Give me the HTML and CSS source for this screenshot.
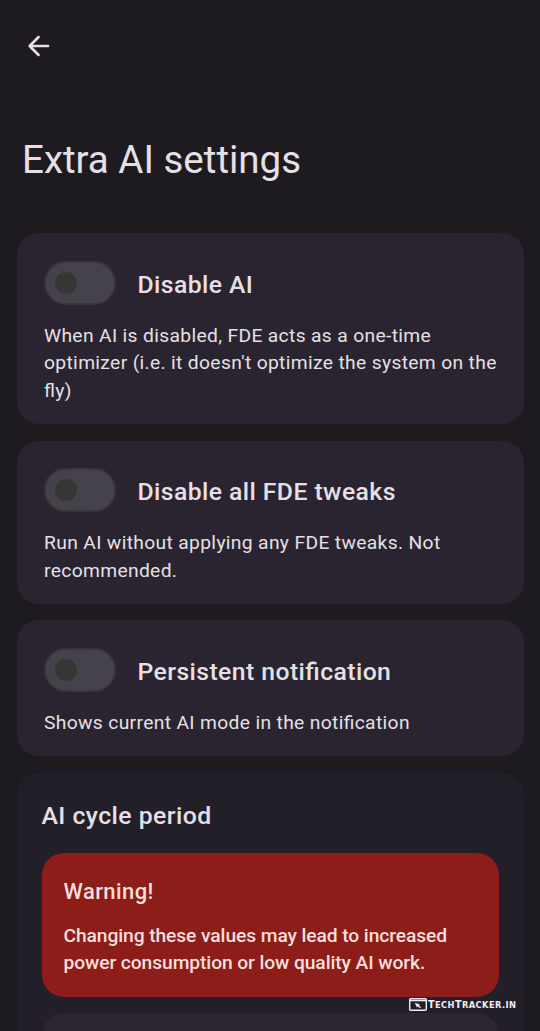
FILE: index.html
```html
<!DOCTYPE html>
<html lang="en">
<head>
<meta charset="utf-8">
<title>Extra AI settings</title>
<link rel="stylesheet" href="styles.css">
</head>
<body>
<div class="screen">
  <header class="top-bar">
    <svg class="back" viewBox="0 0 24 24" role="img" aria-label="Back"><path d="M21.1 12H3M11.6 3L2.6 12l9 9"/></svg>
    <h1 class="page-title">Extra AI settings</h1>
  </header>
  <main class="settings">
    <section class="card">
      <div class="row"><span class="switch"><span class="thumb"></span></span><h2 class="card-title">Disable AI</h2></div>
      <p class="body">When AI is disabled, FDE acts as a one-time<br>optimizer (i.e. it doesn't optimize the system on the<br>fly)</p>
    </section>
    <section class="card">
      <div class="row"><span class="switch"><span class="thumb"></span></span><h2 class="card-title">Disable all FDE tweaks</h2></div>
      <p class="body">Run AI without applying any FDE tweaks. Not<br>recommended.</p>
    </section>
    <section class="card">
      <div class="row"><span class="switch"><span class="thumb"></span></span><h2 class="card-title">Persistent notification</h2></div>
      <p class="body">Shows current AI mode in the notification</p>
    </section>
    <section class="group">
      <h2 class="group-title">AI cycle period</h2>
      <div class="warning">
        <h3 class="warning-title">Warning!</h3>
        <p class="warning-text">Changing these values may lead to increased<br>power consumption or low quality AI work.</p>
      </div>
      <div class="next-item"></div>
    </section>
  </main>
  <div class="watermark">
    <svg class="mark-icon" viewBox="0 0 18 13"><rect x=".7" y=".7" width="16.6" height="11.6" rx="1"/><path d="M1 2.6h16"/><path class="cursor" d="M5.8 5l5.2 1.3-1.2.9 2.2 2-1.1 1-2.2-2-.8 1.2z"/></svg>
    <span class="mark-text"><b>T</b>ECH<b>T</b>RACKER.IN</span>
  </div>
</div>
</body>
</html>
```
FILE: styles.css
```css
* { box-sizing: border-box; }
body { margin: 0; background: #1d1b1f; color: #e6e0e6; font-family: Roboto, sans-serif; font-feature-settings: "liga" 1; }
h1, h2, h3, p { margin: 0; }
.screen { position: relative; height: 1031px; overflow: hidden; }
.top-bar { height: 233.3px; padding: 34px 22px 0; }
.back { display: block; width: 24px; height: 24px; margin-left: 5px; fill: none; stroke: #e6e0e6; stroke-width: 2.5; stroke-linecap: round; stroke-linejoin: round; }
.page-title { margin-top: 77px; font-size: 38.5px; line-height: 50px; font-weight: 400; white-space: nowrap; }
.settings { display: flex; flex-direction: column; gap: 16.5px; padding: 0 16.5px; }
.card { padding: 27.3px 20px 19.8px 27.5px; border-radius: 22px; background: #29242f; }
.row { display: flex; align-items: center; gap: 22px; height: 44px; }
.switch { display: flex; align-items: center; width: 71.5px; height: 44px; padding-left: 8.5px; border: 2.75px solid #393739; border-radius: 22px; background: #46424b; }
.thumb { width: 22px; height: 22px; border-radius: 50%; background: #373637; }
.card-title { padding-top: 3px; font-size: 24.75px; line-height: 33px; font-weight: 500; letter-spacing: .42px; white-space: nowrap; }
.body { margin-top: 17.2px; font-size: 19.25px; line-height: 27.5px; letter-spacing: .34px; white-space: nowrap; }
.group { height: 300px; padding: 26.7px 25px 0; border-radius: 22px; background: #231f29; }
.group-title { font-size: 24.75px; line-height: 33px; font-weight: 500; letter-spacing: .45px; }
.warning { height: 143.5px; margin-top: 20.8px; padding: 24px 22px; border-radius: 22px; background: #8c1d18; color: #f9dedc; }
.warning-title { font-size: 22px; line-height: 30px; font-weight: 500; letter-spacing: .4px; }
.warning-text { margin-top: 14.5px; font-size: 19.25px; line-height: 27.5px; font-weight: 500; letter-spacing: -.1px; white-space: nowrap; }
.next-item { height: 120px; margin-top: 16.5px; border-radius: 22px; background: #2b2631; }
.watermark { position: absolute; left: 409px; top: 996px; display: flex; align-items: center; gap: 1px; color: #f2edf3; }
.mark-icon { width: 18px; height: 13px; fill: none; stroke: currentColor; stroke-width: 1.4; }
.mark-icon .cursor { fill: currentColor; stroke: none; }
.mark-text { padding-top: 2px; font: 700 8.3px/13px "DejaVu Sans", sans-serif; letter-spacing: .42px; white-space: nowrap; }
.mark-text b { font-size: 9.6px; }
```
